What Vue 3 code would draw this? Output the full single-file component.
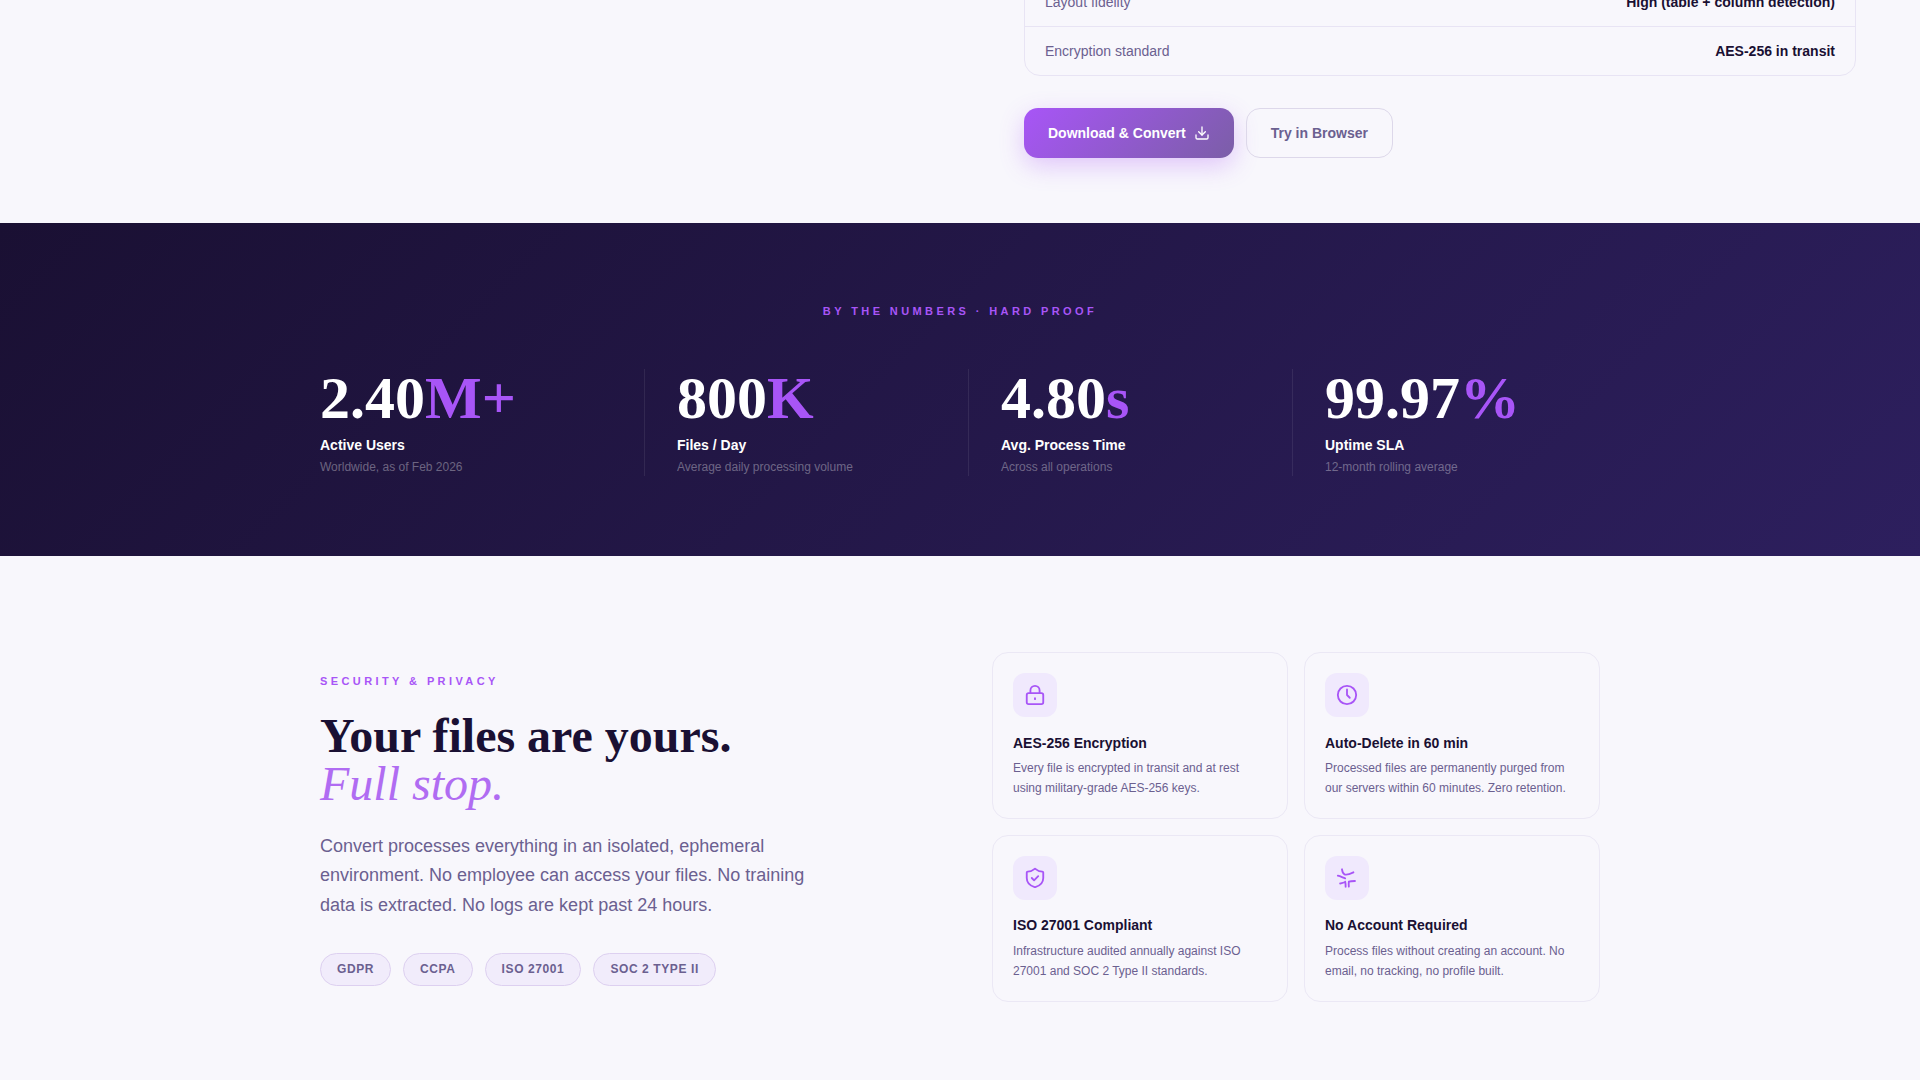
<template>
    <div class="page">
        <section class="hero">
            <div class="hero-side">
                <div class="spec-card">
                    <div v-for="row in specRows" :key="row.label" class="spec-row">
                        <span class="spec-label">{{ row.label }}</span>
                        <span class="spec-value">{{ row.value }}</span>
                    </div>
                </div>
                <div class="hero-actions">
                    <button class="btn btn-primary">
                        Download &amp; Convert
                        <svg class="btn-icon" viewBox="0 0 24 24" fill="none" stroke="currentColor" stroke-width="2" stroke-linecap="round" stroke-linejoin="round">
                            <path d="M21 15v4a2 2 0 0 1-2 2H5a2 2 0 0 1-2-2v-4" />
                            <path d="M7 10l5 5 5-5" />
                            <path d="M12 15V3" />
                        </svg>
                    </button>
                    <button class="btn btn-ghost">Try in Browser</button>
                </div>
            </div>
        </section>

        <section class="numbers">
            <p class="numbers-label">BY THE NUMBERS · HARD PROOF</p>
            <div class="stats">
                <div v-for="stat in stats" :key="stat.title" class="stat">
                    <div class="stat-value">{{ stat.value }}<span class="stat-unit">{{ stat.unit }}</span></div>
                    <div class="stat-title">{{ stat.title }}</div>
                    <div class="stat-note">{{ stat.note }}</div>
                </div>
            </div>
        </section>

        <section class="security">
            <div class="security-copy">
                <p class="eyebrow">SECURITY &amp; PRIVACY</p>
                <h2 class="heading">Your files are yours.<br /><em>Full stop.</em></h2>
                <p class="lead">
                    Convert processes everything in an isolated, ephemeral environment. No employee can access your
                    files. No training data is extracted. No logs are kept past 24 hours.
                </p>
                <div class="pills">
                    <span v-for="pill in pills" :key="pill" class="pill">{{ pill }}</span>
                </div>
            </div>
            <div class="features">
                <div v-for="item in features" :key="item.title" class="feature">
                    <div class="feature-icon">
                        <svg viewBox="0 0 24 24" fill="none" stroke="currentColor" stroke-width="2" stroke-linecap="round" stroke-linejoin="round">
                            <path v-for="d in item.paths" :key="d" :d="d" />
                        </svg>
                    </div>
                    <h3 class="feature-title">{{ item.title }}</h3>
                    <p class="feature-text">{{ item.text }}</p>
                </div>
            </div>
        </section>
    </div>
</template>

<script setup>
    const specRows = [
        { label: 'Layout fidelity', value: 'High (table + column detection)' },
        { label: 'Encryption standard', value: 'AES-256 in transit' }
    ];

    const stats = [
        { value: '2.40', unit: 'M+', title: 'Active Users', note: 'Worldwide, as of Feb 2026' },
        { value: '800', unit: 'K', title: 'Files / Day', note: 'Average daily processing volume' },
        { value: '4.80', unit: 's', title: 'Avg. Process Time', note: 'Across all operations' },
        { value: '99.97', unit: '%', title: 'Uptime SLA', note: '12-month rolling average' }
    ];

    const pills = ['GDPR', 'CCPA', 'ISO 27001', 'SOC 2 TYPE II'];

    const features = [
        {
            title: 'AES-256 Encryption',
            text: 'Every file is encrypted in transit and at rest using military-grade AES-256 keys.',
            paths: [
                'M5 10h14a2 2 0 0 1 2 2v8a2 2 0 0 1-2 2H5a2 2 0 0 1-2-2v-8a2 2 0 0 1 2-2z',
                'M7 10V7a5 5 0 0 1 10 0v3',
                'M12 15.5v1'
            ]
        },
        {
            title: 'Auto-Delete in 60 min',
            text: 'Processed files are permanently purged from our servers within 60 minutes. Zero retention.',
            paths: ['M22 12a10 10 0 1 1-20 0 10 10 0 0 1 20 0z', 'M12 6v6l3 3']
        },
        {
            title: 'ISO 27001 Compliant',
            text: 'Infrastructure audited annually against ISO 27001 and SOC 2 Type II standards.',
            paths: [
                'M21 12c0 5.5-4 8.5-8.66 9.95a1 1 0 0 1-.67-.01C7 20.5 3 17.5 3 12V6a1 1 0 0 1 1-1c2.5 0 5.5-1.2 7.24-2.72a1.17 1.17 0 0 1 1.52 0C14.5 3.8 17.5 5 20 5a1 1 0 0 1 1 1z',
                'M8.5 12l2.5 2.5 4.5-4.5'
            ]
        },
        {
            title: 'No Account Required',
            text: 'Process files without creating an account. No email, no tracking, no profile built.',
            paths: [
                'M6.5 2.5c.4 2.5 1 4.5 2.8 5.5 2.5 1.2 6-.4 9.7-2.2',
                'M2 9.5c2.5.6 5 1.8 8 2.9',
                'M4.5 18c2-.6 5.2-1 5.5-2 .4 1.5.6 3.5.5 5.5',
                'M20.7 15.3c-2.5 0-5 .1-6.7.7-.2 1.8-.2 3.6 0 5.5'
            ]
        }
    ];
</script>

<style>
    body {
        margin: 0;
        background: #f8f7fc;
    }
</style>

<style scoped>
    .page {
        height: 1080px;
        overflow: hidden;
        background: #f8f7fc;
        font-family: 'Liberation Sans', Arial, sans-serif;
        color: #1a1033;
    }

    /* 顶部（规格表与按钮） */
    .hero {
        display: flex;
        justify-content: flex-end;
        height: 223px;
        padding-right: 64px;
        box-sizing: border-box;
    }

    .hero-side {
        width: 832px;
    }

    .spec-card {
        margin-top: -23px;
        border: 1px solid #e8e4f4;
        border-radius: 16px;
    }

    .spec-row {
        display: flex;
        justify-content: space-between;
        align-items: center;
        height: 48px;
        padding: 0 20px;
        font-size: 14px;
    }

    .spec-row + .spec-row {
        border-top: 1px solid #e8e4f4;
    }

    .spec-label {
        color: #6b6090;
    }

    .spec-value {
        font-weight: 700;
        color: #1a1033;
    }

    .hero-actions {
        display: flex;
        gap: 12px;
        margin-top: 32px;
    }

    .btn {
        display: inline-flex;
        align-items: center;
        gap: 8px;
        height: 50px;
        padding: 0 24px;
        border-radius: 14px;
        font-family: inherit;
        font-size: 14px;
        font-weight: 700;
        box-sizing: border-box;
    }

    .btn-primary {
        border: none;
        color: #ffffff;
        background: linear-gradient(135deg, #a855f7, #7b5ea7);
        box-shadow: 0 8px 24px rgba(168, 85, 247, 0.3);
    }

    .btn-icon {
        width: 16px;
        height: 16px;
    }

    .btn-ghost {
        border: 1px solid #ddd8ea;
        color: #6b6090;
        background: transparent;
    }

    /* 数据区 */
    .numbers {
        height: 333px;
        padding-top: 80px;
        box-sizing: border-box;
        background: linear-gradient(135deg, #1a1033, #2d1f5e);
    }

    .numbers-label {
        margin: 0 0 48px;
        font-size: 11px;
        line-height: 17.6px;
        font-weight: 700;
        letter-spacing: 3.4px;
        text-align: center;
        color: #a855f7;
    }

    .stats {
        display: grid;
        grid-template-columns: 325px 324px 324px 307px;
        width: 1280px;
        margin: 0 auto;
    }

    .stat {
        height: 107px;
        padding-left: 32px;
        border-right: 1px solid rgba(255, 255, 255, 0.08);
    }

    .stat:first-child {
        padding-left: 0;
    }

    .stat:last-child {
        border-right: none;
    }

    .stat-value {
        font-family: 'Liberation Serif', 'Times New Roman', serif;
        font-size: 60px;
        line-height: 58px;
        font-weight: 700;
        color: #ffffff;
    }

    .stat-unit {
        color: #a855f7;
    }

    .stat-title {
        margin-top: 7px;
        font-size: 14px;
        line-height: 22.4px;
        font-weight: 700;
        color: #ffffff;
    }

    .stat-note {
        margin-top: 2px;
        font-size: 12px;
        line-height: 19.2px;
        color: rgba(255, 255, 255, 0.35);
    }

    /* 安全区 */
    .security {
        display: grid;
        grid-template-columns: 608px 608px;
        gap: 64px;
        align-items: start;
        width: 1280px;
        margin: 0 auto;
        padding-top: 96px;
    }

    .security-copy {
        padding-top: 21px;
    }

    .eyebrow {
        margin: 0 0 21px;
        font-size: 11px;
        line-height: 17.6px;
        font-weight: 700;
        letter-spacing: 3.4px;
        color: #a855f7;
    }

    .heading {
        margin: 0 0 24px;
        font-family: 'Liberation Serif', 'Times New Roman', serif;
        font-size: 48px;
        line-height: 48px;
        font-weight: 700;
        color: #1a1033;
    }

    .heading em {
        font-weight: 400;
        color: #b06cf2;
    }

    .lead {
        width: 500px;
        margin: 0 0 33px;
        font-size: 18px;
        line-height: 29.5px;
        color: #6b6090;
    }

    .pills {
        display: flex;
        gap: 12px;
    }

    .pill {
        height: 33px;
        padding: 0 16px;
        border: 1px solid #ddd0f0;
        border-radius: 17px;
        box-sizing: border-box;
        background: #f1ecfb;
        font-size: 12px;
        line-height: 31px;
        font-weight: 700;
        letter-spacing: 0.05em;
        color: #6b6090;
    }

    .features {
        display: grid;
        grid-template-columns: 1fr 1fr;
        gap: 16px;
    }

    .feature {
        padding: 20px;
        border: 1px solid #ebe8f5;
        border-radius: 16px;
    }

    .feature-icon {
        display: flex;
        align-items: center;
        justify-content: center;
        width: 44px;
        height: 44px;
        margin-bottom: 14.5px;
        border-radius: 12px;
        background: #f0e9fd;
        color: #a855f7;
    }

    .feature-icon svg {
        width: 22px;
        height: 22px;
    }

    .feature-title {
        margin: 0 0 4px;
        font-size: 14px;
        line-height: 22.4px;
        font-weight: 700;
        color: #1a1033;
    }

    .feature-text {
        margin: 0;
        font-size: 12px;
        line-height: 20px;
        color: #6b6090;
    }
</style>
